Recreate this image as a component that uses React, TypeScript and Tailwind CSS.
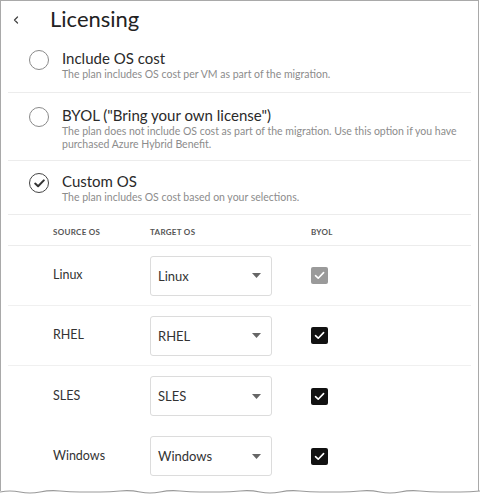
import { ChevronLeft } from "lucide-react";

type Option = {
  id: string;
  title: string;
  desc: string;
  selected?: boolean;
  className: string;
};

const options: Option[] = [
  {
    id: "include",
    title: "Include OS cost",
    desc: "The plan includes OS cost per VM as part of the migration.",
    className: "h-[55px] pt-[11px] border-b border-[#ececec]",
  },
  {
    id: "byol",
    title: 'BYOL ("Bring your own license")',
    desc: "The plan does not include OS cost as part of the migration. Use this option if you have purchased Azure Hybrid Benefit.",
    className: "h-[68px] pt-[13px] border-b border-[#ececec]",
  },
  {
    id: "custom",
    title: "Custom OS",
    desc: "The plan includes OS cost based on your selections.",
    selected: true,
    className: "h-[54px] pt-[11px] border-b border-[#ececec]",
  },
];

const rows = [
  { source: "Linux", target: "Linux", byolDisabled: true, line: true },
  { source: "RHEL", target: "RHEL", line: true },
  { source: "SLES", target: "SLES" },
  { source: "Windows", target: "Windows" },
];

function Radio({ selected }: { selected?: boolean }) {
  return (
    <div
      className={`mt-[1px] flex size-[20px] shrink-0 items-center justify-center rounded-full border-[1.5px] ${
        selected ? "border-[#444]" : "border-[#8a8a8a]"
      }`}
    >
      {selected && (
        <svg width="11" height="9" viewBox="0 0 11 9" fill="none">
          <path d="M1.2 4.6 L4.1 7.3 L9.8 1.4" stroke="#333" strokeWidth="2" strokeLinecap="round" strokeLinejoin="round" />
        </svg>
      )}
    </div>
  );
}

function Checkbox({ disabled }: { disabled?: boolean }) {
  return (
    <div
      className={`flex size-[17px] items-center justify-center rounded-[2px] ${
        disabled ? "bg-[#9a9a9a]" : "bg-[#111]"
      }`}
    >
      <svg width="11" height="9" viewBox="0 0 11 9" fill="none">
        <path d="M1.5 4.7 L4.2 7.2 L9.6 1.6" stroke="#fff" strokeWidth="1.6" strokeLinecap="round" strokeLinejoin="round" />
      </svg>
    </div>
  );
}

function Select({ value }: { value: string }) {
  return (
    <div className="flex h-[40px] w-[122px] items-center justify-between rounded-[3px] border border-[#dcdcdc] bg-white pl-[7px] pr-[10px] text-[13px] text-[#333]">
      <span className="mt-[2px]">{value}</span>
      <svg width="9" height="5" viewBox="0 0 9 5">
        <path d="M0 0 H9 L4.5 5 Z" fill="#666" />
      </svg>
    </div>
  );
}

export default function App() {
  return (
    <div className="h-[495px] w-[480px] bg-white font-['Lato',sans-serif] text-[#333]">
      <div className="relative h-[491px] w-[479px] border border-b-0 border-[#a9a9a9]">
        <div className="flex h-[37px] items-center">
          <ChevronLeft className="ml-[9px] size-[12px] text-[#444]" strokeWidth={2.5} />
          <h1 className="ml-[28px] mt-[-2px] text-[22px] leading-none text-[#222]">Licensing</h1>
        </div>

        <div className="mx-[7px]">
          {options.map((o) => (
            <div key={o.id} className={`flex gap-[13px] pl-[21px] ${o.className}`}>
              <Radio selected={o.selected} />
              <div>
                <div className="text-[15px] leading-[18px] text-[#2a2a2a]">{o.title}</div>
                <div className="mt-[1px] pr-[6px] text-[10.5px] leading-[13px] text-[#8c8c8c]">{o.desc}</div>
              </div>
            </div>
          ))}

          <div className="grid h-[31px] grid-cols-[97px_161px_1fr] items-center border-b border-[#ececec] pl-[45px] pt-[3px] text-[8px] font-bold tracking-[0.3px] text-[#555]">
            <span>SOURCE OS</span>
            <span>TARGET OS</span>
            <span>BYOL</span>
          </div>

          {rows.map((r) => (
            <div
              key={r.source}
              className={`grid h-[60px] grid-cols-[97px_161px_1fr] items-center pl-[45px] ${
                r.line ? "border-b border-[#f0f0f0]" : ""
              }`}
            >
              <span className="text-[12.5px] text-[#333]">{r.source}</span>
              <Select value={r.target} />
              <Checkbox disabled={r.byolDisabled} />
            </div>
          ))}
        </div>

        <svg className="absolute bottom-[-4px] left-[-1px]" width="480" height="6" viewBox="0 0 480 6">
          <path
            d="M0 3 Q10 1 20 3 T40 3 T60 2 T80 3 T100 3 T120 2 T140 3 T160 3 T180 2 T200 3 T220 3 T240 2 T260 3 T280 3 T300 2 T320 3 T340 3 T360 2 T380 3 T400 3 T420 2 T440 3 T460 3 T480 2"
            stroke="#9a9a9a"
            strokeWidth="1.2"
            fill="none"
          />
        </svg>
      </div>
    </div>
  );
}
